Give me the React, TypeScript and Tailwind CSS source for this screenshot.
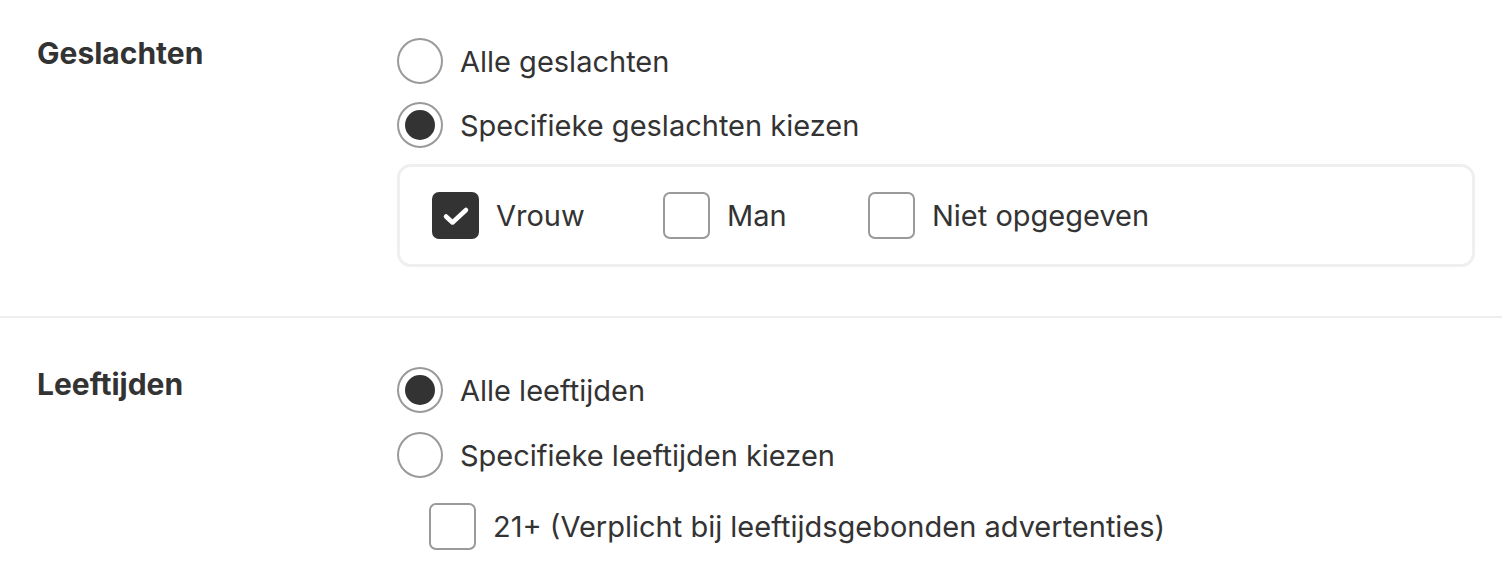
import React from 'react';

function Radio({ checked, label }: { checked?: boolean; label: string }) {
  return (
    <div className="flex items-center h-[46px]">
      <span className="w-[46px] h-[46px] rounded-full border-2 border-[#9a9a9a] bg-white flex items-center justify-center shrink-0">
        {checked && <span className="w-[30px] h-[30px] rounded-full bg-[#333333]" />}
      </span>
      <span className="ml-[17px] text-[29px] text-[#333333] leading-none">{label}</span>
    </div>
  );
}

function Checkbox({ checked, label }: { checked?: boolean; label: string }) {
  return (
    <div className="flex items-center">
      {checked ? (
        <span className="w-[47px] h-[47px] rounded-[7px] bg-[#333333] flex items-center justify-center shrink-0">
          <svg width="28" height="28" viewBox="0 0 28 28" fill="none">
            <path d="M4 14.5 L10.5 20.5 L24 8" stroke="white" strokeWidth="4.5" strokeLinecap="round" strokeLinejoin="round" />
          </svg>
        </span>
      ) : (
        <span className="w-[47px] h-[47px] rounded-[7px] border-2 border-[#9a9a9a] bg-white shrink-0" />
      )}
      <span className="ml-[17px] text-[29px] text-[#333333] leading-none">{label}</span>
    </div>
  );
}

export default function App() {
  return (
    <div className="w-[1502px] h-[584px] bg-white overflow-hidden" style={{ fontFamily: 'Inter, "Noto Sans", sans-serif' }}>
      {/* Geslachten */}
      <section className="flex pt-[38px] pb-[49px]">
        <h2 className="w-[397px] pl-[37px] text-[30px] font-bold text-[#333333] leading-none">Geslachten</h2>
        <div className="flex flex-col">
          <div className="flex flex-col gap-[18px]">
            <Radio label="Alle geslachten" />
            <Radio checked label="Specifieke geslachten kiezen" />
          </div>
          <div className="mt-[16px] w-[1078px] h-[103px] rounded-[14px] border-[3px] border-[#efefef] flex items-center pl-[32px]">
            <div className="w-[231px]"><Checkbox checked label="Vrouw" /></div>
            <div className="w-[205px]"><Checkbox label="Man" /></div>
            <Checkbox label="Niet opgegeven" />
          </div>
        </div>
      </section>

      <div className="h-[2px] bg-[#eeeeee]" />

      {/* Leeftijden */}
      <section className="flex pt-[49px]">
        <h2 className="w-[397px] pl-[37px] pt-[2px] text-[30px] font-bold text-[#333333] leading-none">Leeftijden</h2>
        <div className="flex flex-col">
          <div className="flex flex-col gap-[19px]">
            <Radio checked label="Alle leeftijden" />
            <Radio label="Specifieke leeftijden kiezen" />
          </div>
          <div className="mt-[25px] pl-[32px]">
            <Checkbox label="21+ (Verplicht bij leeftijdsgebonden advertenties)" />
          </div>
        </div>
      </section>
    </div>
  );
}
